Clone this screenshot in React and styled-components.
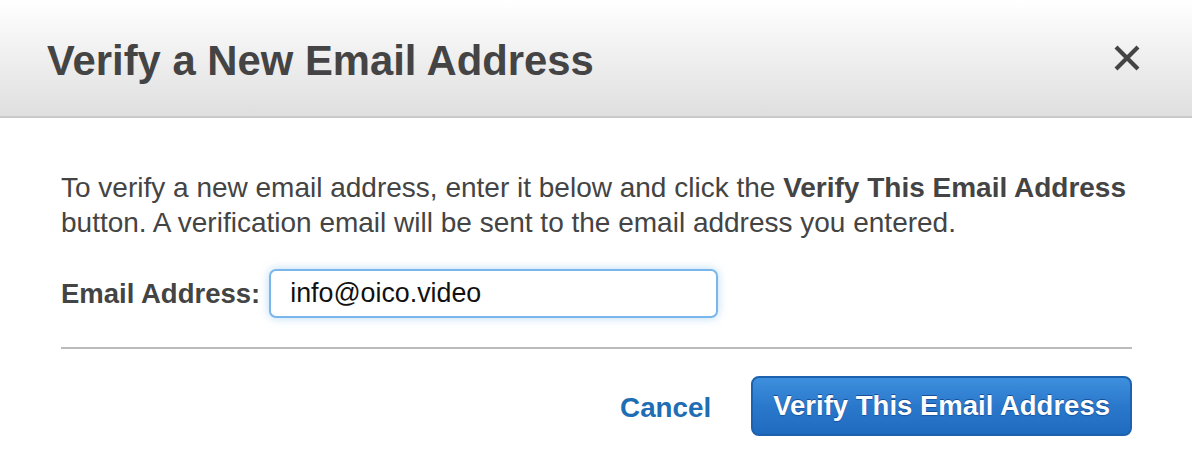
import React from "react";
import styled, { createGlobalStyle } from "styled-components";

const Global = createGlobalStyle`
  html, body { margin: 0; padding: 0; background: #fff; }
  body { font-family: "Liberation Sans", Arial, Helvetica, sans-serif; }
  * { box-sizing: border-box; }
`;

const Dialog = styled.div`
  width: 1192px;
  height: 470px;
  background: #fff;
  overflow: hidden;
`;

const Header = styled.header`
  height: 118px;
  display: flex;
  align-items: center;
  justify-content: space-between;
  padding: 6px 50px 0 47px;
  background: linear-gradient(to bottom, #ffffff 0%, #dfdfdf 100%);
  border-bottom: 2px solid #cacaca;
`;

const Title = styled.h1`
  margin: 0;
  font-size: 41.8px;
  font-weight: 700;
  color: #444;
`;

const CloseButton = styled.button`
  width: 30px;
  height: 30px;
  margin-top: -6px;
  padding: 0;
  border: 0;
  background: none;
  display: flex;
  align-items: center;
  justify-content: center;
  cursor: pointer;
`;

const Body = styled.div`
  padding: 52px 60px 0 61px;
`;

const Intro = styled.p`
  margin: 0;
  font-size: 28px;
  line-height: 35px;
  color: #444;
  white-space: nowrap;

  strong { font-weight: 700; }
`;

const FormRow = styled.div`
  display: flex;
  align-items: center;
  gap: 9px;
  margin-top: 29px;
`;

const Label = styled.label`
  font-size: 27.5px;
  font-weight: 700;
  color: #444;
`;

const Input = styled.input`
  width: 449px;
  height: 49px;
  padding: 0 0 0 19px;
  border: 2px solid #79b6ec;
  border-radius: 7px;
  box-shadow: 0 0 10px rgba(102, 175, 233, 0.45);
  font-family: inherit;
  font-size: 26.8px;
  color: #111;
  outline: none;
`;

const Divider = styled.hr`
  margin: 29px 0 0;
  height: 2px;
  border: 0;
  background: #bcbcbc;
`;

const Footer = styled.div`
  display: flex;
  justify-content: flex-end;
  align-items: center;
  gap: 40px;
  margin-top: 27px;
`;

const CancelLink = styled.a`
  font-size: 27.8px;
  font-weight: 700;
  color: #1f6db3;
  text-decoration: none;
  cursor: pointer;
  padding-top: 4px;
`;

const PrimaryButton = styled.button`
  height: 60px;
  padding: 0 20px;
  border: 2px solid #1d62ae;
  border-radius: 8px;
  background: linear-gradient(to bottom, #3e8fdd 0%, #2a78cc 50%, #1f6bc0 100%);
  color: #fff;
  font-family: inherit;
  font-size: 27.5px;
  font-weight: 700;
  text-shadow: 0 -1px 0 rgba(0, 40, 100, 0.55), 0 1px 1px rgba(0, 40, 100, 0.4);
  cursor: pointer;
`;

const CloseIcon = () => (
  <svg width="28" height="28" viewBox="0 0 28 28" aria-hidden="true">
    <path d="M3 3 L25 25 M25 3 L3 25" stroke="#444" strokeWidth="4.2" strokeLinecap="butt" />
  </svg>
);

export default function App() {
  return (
    <>
      <Global />
      <Dialog>
        <Header>
          <Title>Verify a New Email Address</Title>
          <CloseButton aria-label="Close">
            <CloseIcon />
          </CloseButton>
        </Header>
        <Body>
          <Intro>
            To verify a new email address, enter it below and click the <strong>Verify This Email Address</strong>
            <br />
            button. A verification email will be sent to the email address you entered.
          </Intro>
          <FormRow>
            <Label htmlFor="email">Email Address:</Label>
            <Input id="email" defaultValue="info@oico.video" />
          </FormRow>
          <Divider />
          <Footer>
            <CancelLink>Cancel</CancelLink>
            <PrimaryButton>Verify This Email Address</PrimaryButton>
          </Footer>
        </Body>
      </Dialog>
    </>
  );
}
